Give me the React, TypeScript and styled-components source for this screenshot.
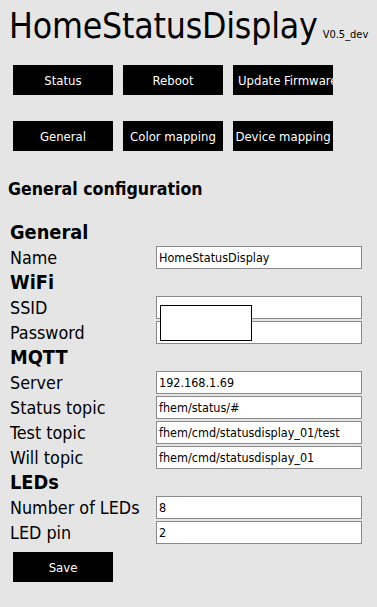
import { Fragment } from 'react'
import styled, { createGlobalStyle } from 'styled-components'

const GlobalStyle = createGlobalStyle`
  html, body {
    margin: 0;
    padding: 0;
    background: #e5e5e5;
  }
  body {
    font-family: 'DejaVu Sans Condensed', 'DejaVu Sans', Verdana, sans-serif;
    color: #000;
  }
`

const Page = styled.div`
  position: relative;
  width: 377px;
  height: 607px;
  overflow: hidden;
`

const TitleRow = styled.div`
  display: flex;
  align-items: baseline;
  padding: 6px 0 0 9px;
  height: 46px;
`

const Title = styled.h1`
  margin: 0;
  font-weight: normal;
  font-size: 35.3px;
  line-height: 40px;
  letter-spacing: -0.2px;
`

const Version = styled.span`
  font-size: 11px;
  margin-left: 5px;
`

const ButtonRow = styled.div<{ $top: number }>`
  display: flex;
  gap: 10px;
  padding-left: 13px;
  margin-top: ${(p) => p.$top}px;
`

const Button = styled.button<{ $align?: 'left' | 'center' }>`
  width: 100px;
  height: 30px;
  border: none;
  background: #000;
  color: #fff;
  font-family: inherit;
  font-size: 13px;
  padding: 0 0 0 ${(p) => (p.$align === 'left' ? 5 : 0)}px;
  white-space: nowrap;
  overflow: hidden;
  text-align: ${(p) => p.$align ?? 'center'};
  line-height: 31px;
`

const PageHeading = styled.h2`
  margin: 28px 0 0 8px;
  font-size: 17.6px;
  line-height: 20px;
  font-weight: bold;
`

const Form = styled.div`
  display: grid;
  grid-template-columns: 146px 206px;
  grid-auto-rows: 25px;
  align-items: center;
  padding-left: 10px;
  margin-top: 21px;
`

const SectionTitle = styled.div`
  grid-column: 1 / span 2;
  font-weight: bold;
  font-size: 19.8px;
`

const Label = styled.label`
  font-size: 17.8px;
  white-space: nowrap;
`

const Input = styled.input`
  box-sizing: border-box;
  width: 206px;
  height: 23px;
  border: 1px solid #8a8a8a;
  background: #fff;
  font-family: inherit;
  font-size: 12.5px;
  padding: 0 2px;
  margin: 0;
  outline: none;
`

const SaveRow = styled.div`
  padding: 7px 0 0 13px;
`

const Redaction = styled.div`
  position: absolute;
  left: 160px;
  top: 305px;
  width: 90px;
  height: 34px;
  background: #fff;
  border: 1px solid #000;
`

type Field = { label: string; value: string }
type Section = { title: string; fields: Field[] }

const sections: Section[] = [
  { title: 'General', fields: [{ label: 'Name', value: 'HomeStatusDisplay' }] },
  {
    title: 'WiFi',
    fields: [
      { label: 'SSID', value: '' },
      { label: 'Password', value: '' },
    ],
  },
  {
    title: 'MQTT',
    fields: [
      { label: 'Server', value: '192.168.1.69' },
      { label: 'Status topic', value: 'fhem/status/#' },
      { label: 'Test topic', value: 'fhem/cmd/statusdisplay_01/test' },
      { label: 'Will topic', value: 'fhem/cmd/statusdisplay_01' },
    ],
  },
  {
    title: 'LEDs',
    fields: [
      { label: 'Number of LEDs', value: '8' },
      { label: 'LED pin', value: '2' },
    ],
  },
]

export default function App() {
  return (
    <Page>
      <GlobalStyle />
      <TitleRow>
        <Title>HomeStatusDisplay</Title>
        <Version>V0.5_dev</Version>
      </TitleRow>

      <ButtonRow $top={13}>
        <Button>Status</Button>
        <Button>Reboot</Button>
        <Button $align="left">Update Firmware</Button>
      </ButtonRow>
      <ButtonRow $top={26}>
        <Button>General</Button>
        <Button>Color mapping</Button>
        <Button>Device mapping</Button>
      </ButtonRow>

      <PageHeading>General configuration</PageHeading>

      <Form>
        {sections.map((s) => (
          <Fragment key={s.title}>
            <SectionTitle>{s.title}</SectionTitle>
            {s.fields.map((f) => (
              <Fragment key={f.label}>
                <Label>{f.label}</Label>
                <Input defaultValue={f.value} readOnly />
              </Fragment>
            ))}
          </Fragment>
        ))}
      </Form>

      <SaveRow>
        <Button>Save</Button>
      </SaveRow>

      <Redaction />
    </Page>
  )
}
